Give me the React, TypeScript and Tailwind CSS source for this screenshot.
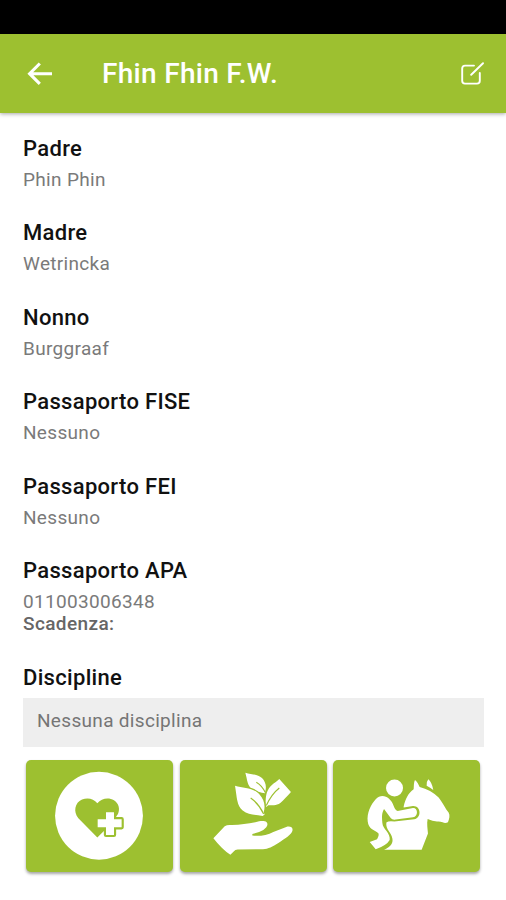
import type { ReactNode } from "react";

interface Field {
  label: string;
  value: string;
}

const fields: Field[] = [
  { label: "Padre", value: "Phin Phin" },
  { label: "Madre", value: "Wetrincka" },
  { label: "Nonno", value: "Burggraaf" },
  { label: "Passaporto FISE", value: "Nessuno" },
  { label: "Passaporto FEI", value: "Nessuno" },
  { label: "Passaporto APA", value: "011003006348" },
];

function BackIcon() {
  return (
    <svg className="block h-6 w-[26px]" viewBox="0 0 26 24" fill="none" stroke="currentColor" strokeWidth="3.100">
      <path d="M12.800 1.500 2.600 11.700 12.800 21.900M3 11.700h22" />
    </svg>
  );
}

function EditIcon() {
  return (
    <svg
      className="block h-6 w-6"
      viewBox="0 0 24 24"
      fill="none"
      stroke="currentColor"
      strokeWidth="1.9"
      strokeLinecap="round"
      strokeLinejoin="round"
    >
      <path d="M14 3.600H5Q2.200 3.600 2.200 6.400V18.800Q2.200 21.600 5 21.600H17Q19.800 21.600 19.800 18.800V11" />
      <path d="M11.200 12.800 23 1.200" />
    </svg>
  );
}

function HealthIcon() {
  return (
    <svg className="block h-full w-full" viewBox="33 30 441 338">
      <circle cx="252" cy="197.500" r="132" fill="#fff" />
      <path
        d="M247 263 190 205C174 187 179 158 201 149C219 141 236 147 247 160C259 145 281 141 297 151C311 160 316 177 309 192L285 225Z"
        fill="#9dc030"
      />
      <path
        d="M273 187h24v21h23v24h-23v23h-24v-23h-25v-24h25Z"
        fill="#fff"
        stroke="#9dc030"
        strokeWidth="13"
        strokeLinejoin="round"
      />
      <path d="M273 187h24v21h23v24h-23v23h-24v-23h-25v-24h25Z" fill="#fff" />
    </svg>
  );
}

function FeedIcon() {
  return (
    <svg className="block h-full w-full" viewBox="14 30 441 338" fill="#fff">
      <path d="M114 265 148 229Q154 225 163 225C190 226 216 221 240 217C253 214 266 211 274 217C280 224 274 234 264 240Q248 249 231 252V257C253 260 276 255 294 246L333 231C347 227 356 235 350 246C344 258 319 272 303 283C286 294 274 298 257 298L187 299Q179 299 175 305L165 315Q139 297 114 265Z" />
      <path d="M210 68C227 74 246 71 260 84C271 95 274 110 270 124L269 130C253 127 240 126 229 116C216 106 216 90 210 68Z" />
      <path d="M312 87 347 126C335 139 325 151 315 159C303 168 289 165 279 166L273 171L271 163C270 134 276 118 289 106C297 98 304 95 312 87Z" />
      <path
        d="M179 107C204 115 233 112 252 133C267 149 271 169 265 187L268 194L262 198C240 194 219 196 202 182C184 166 185 144 179 107Z"
        stroke="#9dc030"
        strokeWidth="7"
        paintOrder="stroke"
      />
      <path
        d="M226 144Q250 161 265 192M243 97Q260 107 270 128M312 114Q288 133 273 167"
        fill="none"
        stroke="#9dc030"
        strokeWidth="3.500"
      />
    </svg>
  );
}

function RiderIcon() {
  return (
    <svg className="block h-full w-full" viewBox="23 30 441 338" fill="#fff">
      <path d="M235 170C240 147 249 129 265 118C266 107 265 98 269 90C276 95 280 104 283 111C305 117 325 127 340 143C352 158 361 178 370 188C375 197 372 207 368 217Q360 221 352 217Q344 214 335 215Q322 214 307 207C304 221 307 237 308 251L289 300H176C195 291 204 281 201 266C199 249 180 239 183 218Q190 212 207 215L267 208C290 203 287 167 263 168L235 173Z" />
      <path d="M304 107Q302 97 309 88Q320 97 324 120Q315 112 304 107Z" />
      <path d="M205 168C196 142 170 128 151 148C136 164 124 190 127 215C129 238 147 240 159 250Q162 256 155 268L133 276L151 298Q184 286 193 270C196 249 172 237 171 219C170 203 168 191 176 177L196 204Q201 211 211 209L263 202C280 199 278 173 263 174L217 183Q210 181 205 168Z" />
      <circle cx="207.500" cy="114" r="25.500" />
    </svg>
  );
}

function Tile({ label, children }: { label: string; children: ReactNode }) {
  return (
    <button
      aria-label={label}
      className="h-[112.500px] flex-1 overflow-hidden rounded-[5px] bg-[#9dc030] shadow-[0_2px_3px_rgba(0,0,0,0.35)]"
    >
      {children}
    </button>
  );
}

export default function App() {
  return (
    <div className="flex h-[900px] w-full flex-col bg-white font-['Roboto',sans-serif]">
      {/* Status bar */}
      <div className="h-[34px] shrink-0 bg-black" />

      {/* App bar */}
      <header className="flex h-[79px] shrink-0 items-center bg-[#9dc030] pr-[22px] pl-[27px] text-white shadow-[0_1px_4px_rgba(0,0,0,0.35)]">
        <button aria-label="Indietro">
          <BackIcon />
        </button>
        <h1 className="ml-[49px] flex-1 text-[28px] leading-8 font-medium tracking-[0.3px]">Fhin Fhin F.W.</h1>
        <button aria-label="Modifica">
          <EditIcon />
        </button>
      </header>

      {/* Horse details */}
      <main className="flex flex-col px-[23px] pt-[21px]">
        <dl className="flex flex-col gap-[25.400px]">
          {fields.map((field) => (
            <div key={field.label}>
              <dt className="text-[22px] leading-[30px] font-medium tracking-[0.320px] text-[#111]">{field.label}</dt>
              <dd className="pt-[2px] text-[19px] leading-[27px] tracking-[0.320px] text-[#7a7a7a]">{field.value}</dd>
            </div>
          ))}
        </dl>
        <p className="-mt-[4px] text-[19px] leading-[26px] font-medium tracking-[0.400px] text-[#666]">Scadenza:</p>

        <h2 className="mt-[26px] text-[22px] leading-[30px] font-medium tracking-[0.320px] text-[#111]">Discipline</h2>
        <div className="mt-[5px] flex h-[49px] w-[461px] items-center bg-[#eee] px-[14px] pb-[3px] text-[19px] tracking-[0.320px] text-[#757575]">
          Nessuna disciplina
        </div>

        {/* Actions */}
        <div className="mt-[13px] flex gap-[6.500px] pr-[3px] pl-[3px]">
          <Tile label="Salute">
            <HealthIcon />
          </Tile>
          <Tile label="Alimentazione">
            <FeedIcon />
          </Tile>
          <Tile label="Attività">
            <RiderIcon />
          </Tile>
        </div>
      </main>
    </div>
  );
}
